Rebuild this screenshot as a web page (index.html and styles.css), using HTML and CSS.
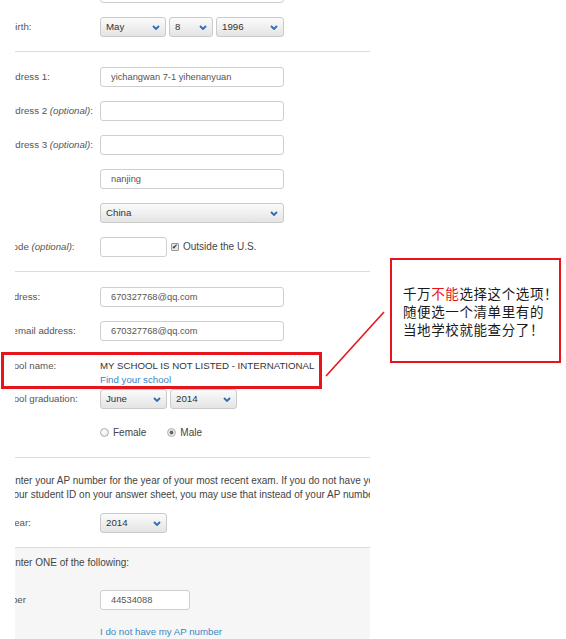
FILE: index.html
```html
<!DOCTYPE html>
<html lang="zh">
<head>
    <meta charset="UTF-8">
    <title>AP Scores - Account</title>
    <link rel="stylesheet" href="styles.css">
</head>
<body>

    <div class="shot">
        <div class="form">
            <!-- 個人情報 -->
            <div class="group">
                <div class="row">
                    <span class="lbl">Middle initial (optional):</span>
                    <input class="input" type="text" value="">
                </div>
                <div class="row">
                    <span class="lbl">Date of birth:</span>
                    <div class="fields">
                        <span class="select w-month">May<svg width="8" height="5" viewBox="0 0 8 5"><polyline points="1,1 4,4 7,1"/></svg></span>
                        <span class="select w-day">8<svg width="8" height="5" viewBox="0 0 8 5"><polyline points="1,1 4,4 7,1"/></svg></span>
                        <span class="select w-year">1996<svg width="8" height="5" viewBox="0 0 8 5"><polyline points="1,1 4,4 7,1"/></svg></span>
                    </div>
                </div>
            </div>

            <!-- 住所 -->
            <div class="group">
                <div class="row">
                    <span class="lbl">Street address 1:</span>
                    <input class="input" type="text" value="yichangwan 7-1 yihenanyuan">
                </div>
                <div class="row">
                    <span class="lbl">Street address 2 <em>(optional)</em>:</span>
                    <input class="input" type="text" value="">
                </div>
                <div class="row">
                    <span class="lbl">Street address 3 <em>(optional)</em>:</span>
                    <input class="input" type="text" value="">
                </div>
                <div class="row">
                    <span class="lbl">City:</span>
                    <input class="input" type="text" value="nanjing">
                </div>
                <div class="row">
                    <span class="lbl"></span>
                    <span class="select w-full">China<svg width="8" height="5" viewBox="0 0 8 5"><polyline points="1,1 4,4 7,1"/></svg></span>
                </div>
                <div class="row">
                    <span class="lbl">Postal Code <em>(optional)</em>:</span>
                    <input class="input short" type="text" value="">
                    <span class="check">&#10004;</span>
                    <span class="check-text">Outside the U.S.</span>
                </div>
            </div>

            <!-- 連絡先・学校 -->
            <div class="group">
                <div class="row">
                    <span class="lbl">Email address:</span>
                    <input class="input" type="text" value="670327768@qq.com">
                </div>
                <div class="row">
                    <span class="lbl">Confirm email address:</span>
                    <input class="input" type="text" value="670327768@qq.com">
                </div>
                <div class="row row-top">
                    <span class="lbl">High school name:</span>
                    <div class="school">
                        <div>MY SCHOOL IS NOT LISTED - INTERNATIONAL</div>
                        <a class="link" href="#">Find your school</a>
                    </div>
                </div>
                <div class="row">
                    <span class="lbl">High school graduation:</span>
                    <div class="fields">
                        <span class="select w-grad">June<svg width="8" height="5" viewBox="0 0 8 5"><polyline points="1,1 4,4 7,1"/></svg></span>
                        <span class="select w-grad">2014<svg width="8" height="5" viewBox="0 0 8 5"><polyline points="1,1 4,4 7,1"/></svg></span>
                    </div>
                </div>
                <div class="row">
                    <span class="lbl">Gender:</span>
                    <span class="radio"></span><span class="radio-text">Female</span>
                    <span class="radio on"></span><span class="radio-text">Male</span>
                </div>
            </div>

            <!-- AP番号 -->
            <div class="group group-ap">
                <p class="intro">Enter your AP number for the year of your most recent exam. If you do not have your AP number but have<br>your student ID on your answer sheet, you may use that instead of your AP number.</p>
                <div class="row">
                    <span class="lbl">Testing year:</span>
                    <span class="select w-grad">2014<svg width="8" height="5" viewBox="0 0 8 5"><polyline points="1,1 4,4 7,1"/></svg></span>
                </div>
            </div>

            <div class="grey">
                <p class="intro">Enter ONE of the following:</p>
                <div class="row">
                    <span class="lbl">AP Number</span>
                    <input class="input ap" type="text" value="44534088">
                </div>
                <div class="row row-link">
                    <span class="lbl"></span>
                    <a class="link" href="#">I do not have my AP number</a>
                </div>
            </div>
        </div>
    </div>

    <!-- 注釈 -->
    <div class="callout"></div>
    <svg class="pointer" width="566" height="639" viewBox="0 0 566 639">
        <line x1="326" y1="376" x2="384" y2="312"/>
    </svg>
    <div class="note">
        千万<span class="red">不能</span>选择这个选项！<br>
        随便选一个清单里有的<br>
        当地学校就能查分了！
    </div>

</body>
</html>
```

FILE: styles.css
```css
/* 基本 */
body {
    margin: 0;
    font-family: "Liberation Sans", Arial, sans-serif;
    font-size: 9.7px;
    color: #333;
    background-color: #fff;
    position: relative;
    width: 566px;
    height: 639px;
    overflow: hidden;
}

.shot {
    margin-left: 15px;
    width: 355px;
    height: 639px;
    overflow: hidden;
}

.form {
    margin-left: -39px;
    margin-top: -32px;
    width: 394px;
}

.group {
    padding: 7.5px 0;
    border-bottom: 1px solid #dcdcdc;
}

.row {
    display: flex;
    align-items: center;
    height: 34px;
}

.row-top {
    align-items: flex-start;
    padding-top: 11.5px;
    box-sizing: border-box;
}

.lbl {
    flex: none;
    width: 124px;
    color: #555;
    white-space: nowrap;
    overflow: hidden;
    line-height: 14px;
}

.fields {
    display: flex;
    gap: 3px;
}

/* 入力 */
.input {
    box-sizing: border-box;
    width: 184px;
    height: 20px;
    margin: 0;
    padding: 0 10px;
    border: 1px solid #cfcfcf;
    border-radius: 3px;
    background-color: #fff;
    font-family: inherit;
    font-size: 9.3px;
    color: #555;
}

.input.short {
    width: 67px;
}

.input.ap {
    width: 90px;
}

.select {
    position: relative;
    box-sizing: border-box;
    display: block;
    height: 20px;
    padding-left: 5px;
    border: 1px solid #cacaca;
    border-radius: 3px;
    background: linear-gradient(#fbfbfb, #e4e4e4);
    line-height: 18px;
    color: #333;
}

.select svg {
    position: absolute;
    right: 5px;
    top: 7px;
    fill: none;
    stroke: #2c6db5;
    stroke-width: 1.8;
}

.w-month { width: 66px; }
.w-day { width: 44px; }
.w-year { width: 68px; }
.w-grad { width: 67px; }
.w-full { width: 184px; }

.check {
    box-sizing: border-box;
    width: 8px;
    height: 8px;
    margin-left: 4px;
    border: 1px solid #999;
    border-radius: 1px;
    background-color: #e8e8e8;
    font-size: 7px;
    line-height: 6px;
    text-align: center;
    color: #222;
}

.check-text {
    margin-left: 4px;
    font-size: 10px;
    color: #444;
}

.school {
    line-height: 14px;
    color: #333;
}

.link {
    color: #3a86c4;
    text-decoration: none;
}

.radio {
    box-sizing: border-box;
    width: 9px;
    height: 9px;
    border: 1px solid #b0b0b0;
    border-radius: 50%;
    background: radial-gradient(circle at 40% 35%, #fff, #dedede);
}

.radio.on {
    background: radial-gradient(circle, #666 0, #666 1.6px, #e2e2e2 2.2px, #f4f4f4);
}

.radio-text {
    margin: 0 21px 0 4px;
    font-size: 10px;
    color: #444;
}

/* AP番号 */
.intro {
    margin: 0;
    padding-left: 32.5px;
    font-size: 10px;
    line-height: 14px;
    color: #444;
    white-space: nowrap;
}

.group-ap {
    padding-top: 16px;
    padding-bottom: 7px;
}

.group-ap .row {
    margin-top: 4px;
}

.grey {
    background-color: #f6f6f6;
    padding-top: 8px;
    height: 120px;
}

.grey .row {
    margin-top: 13px;
}

.grey .row-link {
    margin-top: 0;
    height: 28px;
}

/* 注釈 */
.callout {
    position: absolute;
    left: 1px;
    top: 352px;
    width: 321px;
    height: 37px;
    box-sizing: border-box;
    border: 3px solid #e8141b;
}

.pointer {
    position: absolute;
    left: 0;
    top: 0;
}

.pointer line {
    stroke: #e8141b;
    stroke-width: 1.6;
}

.note {
    position: absolute;
    left: 390px;
    top: 258px;
    width: 171px;
    height: 105px;
    box-sizing: border-box;
    padding: 24px 0 0 11px;
    border: 2px solid #e8141b;
    font-family: "Noto Sans CJK SC", sans-serif;
    font-size: 13.5px;
    line-height: 18px;
    letter-spacing: 0.6px;
    color: #1a1a1a;
}

.note .red {
    color: #e8141b;
}
```
